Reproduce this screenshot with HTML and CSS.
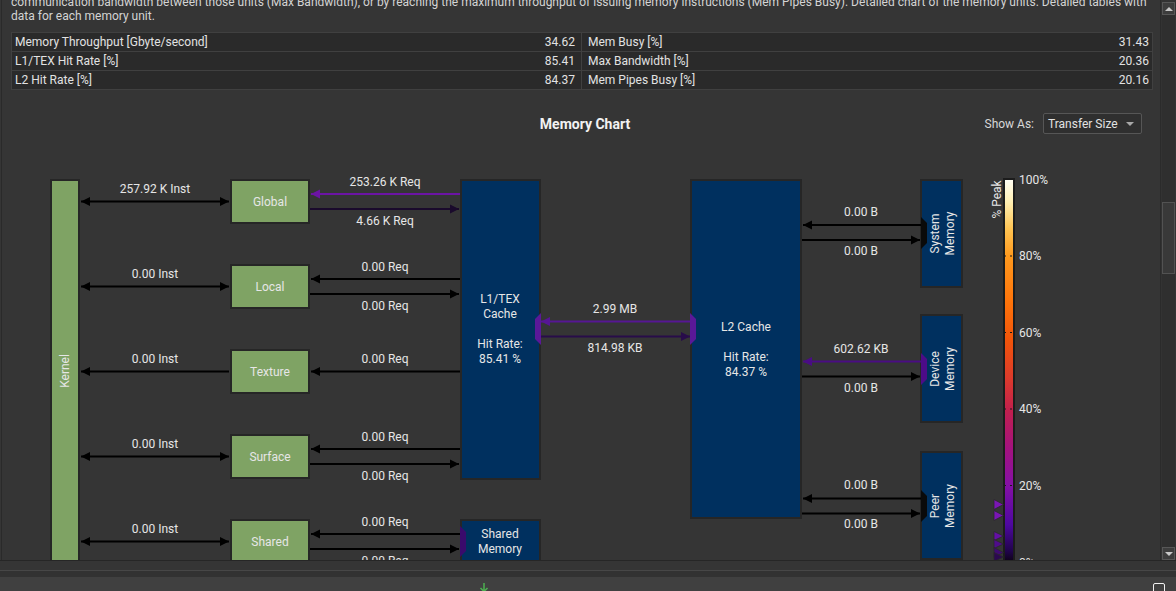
FILE: index.html
```html
<!DOCTYPE html>
<html lang="en">
<head>
<meta charset="utf-8">
<title>Memory Workload Analysis</title>
<link rel="stylesheet" href="styles.css">
</head>
<body>
<div class="main">
  <div class="content">
    <p class="desc">communication bandwidth between those units (Max Bandwidth), or by reaching the maximum throughput of issuing memory instructions (Mem Pipes Busy). Detailed chart of the memory units. Detailed tables with<br>data for each memory unit.</p>
    <div class="stats">
      <div class="cell l"><span>Memory Throughput [Gbyte/second]</span><span>34.62</span></div>
      <div class="cell"><span>Mem Busy [%]</span><span>31.43</span></div>
      <div class="cell l"><span>L1/TEX Hit Rate [%]</span><span>85.41</span></div>
      <div class="cell"><span>Max Bandwidth [%]</span><span>20.36</span></div>
      <div class="cell l last"><span>L2 Hit Rate [%]</span><span>84.37</span></div>
      <div class="cell last"><span>Mem Pipes Busy [%]</span><span>20.16</span></div>
    </div>
    <div class="chart-head">
      <div></div>
      <h2 class="chart-title">Memory Chart</h2>
      <div class="show-as"><span>Show As:</span><div class="select">Transfer Size<span class="caret"></span></div></div>
    </div>
    <svg class="diagram" width="1158" height="390" viewBox="2 170 1158 390">
      <defs>
        <linearGradient id="heat" x1="0" y1="0" x2="0" y2="1">
          <stop offset="0" stop-color="#fffef5"/>
          <stop offset="0.06" stop-color="#ffefb2"/>
          <stop offset="0.13" stop-color="#ffc452"/>
          <stop offset="0.2" stop-color="#ff9a1e"/>
          <stop offset="0.32" stop-color="#ff740a"/>
          <stop offset="0.42" stop-color="#f2540a"/>
          <stop offset="0.52" stop-color="#dc3a2c"/>
          <stop offset="0.6" stop-color="#c2204c"/>
          <stop offset="0.7" stop-color="#a4127e"/>
          <stop offset="0.8" stop-color="#8410a6"/>
          <stop offset="0.9" stop-color="#4e08a0"/>
          <stop offset="0.97" stop-color="#20044a"/>
          <stop offset="1" stop-color="#0c0210"/>
        </linearGradient>
      </defs>

      <!-- nodes -->
      <rect class="g" x="51" y="180" width="28" height="420"/>
      <rect class="g" x="231" y="180" width="78" height="43"/>
      <rect class="g" x="231" y="265" width="78" height="43"/>
      <rect class="g" x="231" y="350" width="78" height="43"/>
      <rect class="g" x="231" y="435" width="78" height="43"/>
      <rect class="g" x="231" y="520" width="78" height="43"/>
      <rect class="b" x="461" y="180" width="79" height="299"/>
      <rect class="b" x="461" y="520" width="79" height="44"/>
      <rect class="b" x="691" y="180" width="110" height="338"/>
      <rect class="b" x="921" y="180" width="41" height="107"/>
      <rect class="b" x="921" y="315" width="41" height="107"/>
      <rect class="b" x="921" y="452" width="41" height="107"/>

      <!-- connector tabs -->
      <polygon class="tab-p" points="541,313 535,319 535,339 541,345"/>
      <polygon class="tab-p" points="690,313 696,319 696,339 690,345"/>
      <polygon class="tab-d" points="460,526 466,532 466,551 460,557"/>
      <polygon class="tab-k" points="921,217 927,223 927,243 921,249"/>
      <polygon class="tab-v" points="921,353 927,359 927,379 921,385"/>
      <polygon class="tab-k" points="921,490 927,496 927,516 921,522"/>

      <!-- kernel <-> units -->
      <g class="ak">
        <line x1="81" y1="201.5" x2="229" y2="201.5"/>
        <polygon points="81,201.5 90,197 90,206"/><polygon points="229,201.5 220,197 220,206"/>
        <line x1="81" y1="286.5" x2="229" y2="286.5"/>
        <polygon points="81,286.5 90,282 90,291"/><polygon points="229,286.5 220,282 220,291"/>
        <line x1="81" y1="371.5" x2="229" y2="371.5"/>
        <polygon points="81,371.5 90,367 90,376"/>
        <line x1="81" y1="456.5" x2="229" y2="456.5"/>
        <polygon points="81,456.5 90,452 90,461"/><polygon points="229,456.5 220,452 220,461"/>
        <line x1="81" y1="541.5" x2="229" y2="541.5"/>
        <polygon points="81,541.5 90,537 90,546"/><polygon points="229,541.5 220,537 220,546"/>
      </g>

      <!-- units <-> L1 -->
      <g class="a1">
        <line x1="311" y1="194" x2="460" y2="194"/>
        <polygon points="311,194 320,189.5 320,198.5"/>
      </g>
      <g class="a2">
        <line x1="310" y1="209" x2="459" y2="209"/>
        <polygon points="459,209 450,204.5 450,213.5"/>
      </g>
      <g class="ak">
        <line x1="311" y1="279" x2="460" y2="279"/>
        <polygon points="311,279 320,274.5 320,283.5"/>
        <line x1="310" y1="294" x2="459" y2="294"/>
        <polygon points="459,294 450,289.5 450,298.5"/>
        <line x1="311" y1="371.5" x2="460" y2="371.5"/>
        <polygon points="311,371.5 320,367 320,376"/>
        <line x1="311" y1="449" x2="460" y2="449"/>
        <polygon points="311,449 320,444.5 320,453.5"/>
        <line x1="310" y1="464" x2="459" y2="464"/>
        <polygon points="459,464 450,459.5 450,468.5"/>
        <line x1="311" y1="534" x2="460" y2="534"/>
        <polygon points="311,534 320,529.5 320,538.5"/>
        <line x1="310" y1="549" x2="459" y2="549"/>
        <polygon points="459,549 450,544.5 450,553.5"/>
      </g>

      <!-- L1 <-> L2 -->
      <g class="a3">
        <line x1="541" y1="321.5" x2="690" y2="321.5"/>
        <polygon points="541,321.5 550,317 550,326"/>
      </g>
      <g class="a4">
        <line x1="541" y1="336.5" x2="690" y2="336.5"/>
        <polygon points="690,336.5 681,332 681,341"/>
      </g>

      <!-- L2 <-> memories -->
      <g class="ak">
        <line x1="803" y1="225" x2="921" y2="225"/>
        <polygon points="803,225 812,220.5 812,229.5"/>
        <line x1="802" y1="240" x2="920" y2="240"/>
        <polygon points="920,240 911,235.5 911,244.5"/>
        <line x1="802" y1="376.5" x2="920" y2="376.5"/>
        <polygon points="920,376.5 911,372 911,381"/>
        <line x1="803" y1="498.5" x2="921" y2="498.5"/>
        <polygon points="803,498.5 812,494 812,503"/>
        <line x1="802" y1="513.5" x2="920" y2="513.5"/>
        <polygon points="920,513.5 911,509 911,518"/>
      </g>
      <g class="a5">
        <line x1="803" y1="361.5" x2="921" y2="361.5"/>
        <polygon points="803,361.5 812,357 812,366"/>
      </g>

      <!-- node labels -->
      <text class="t c" transform="translate(64.5,371) rotate(-90)" x="0" y="4.3">Kernel</text>
      <text class="t c" x="270" y="206">Global</text>
      <text class="t c" x="270" y="291">Local</text>
      <text class="t c" x="270" y="376">Texture</text>
      <text class="t c" x="270" y="461">Surface</text>
      <text class="t c" x="270" y="546">Shared</text>
      <text class="t c" x="500" y="303">L1/TEX</text>
      <text class="t c" x="500" y="318">Cache</text>
      <text class="t c" x="500" y="348">Hit Rate:</text>
      <text class="t c" x="500" y="363">85.41 %</text>
      <text class="t c" x="500" y="538">Shared</text>
      <text class="t c" x="500" y="553">Memory</text>
      <text class="t c" x="746" y="331">L2 Cache</text>
      <text class="t c" x="746" y="361">Hit Rate:</text>
      <text class="t c" x="746" y="376">84.37 %</text>
      <g transform="translate(941,233.5) rotate(-90)">
        <text class="t c" x="0" y="-2">System</text>
        <text class="t c" x="0" y="13">Memory</text>
      </g>
      <g transform="translate(941,369) rotate(-90)">
        <text class="t c" x="0" y="-2">Device</text>
        <text class="t c" x="0" y="13">Memory</text>
      </g>
      <g transform="translate(941,506) rotate(-90)">
        <text class="t c" x="0" y="-2">Peer</text>
        <text class="t c" x="0" y="13">Memory</text>
      </g>

      <!-- edge labels -->
      <text class="t c" x="155" y="193">257.92 K Inst</text>
      <text class="t c" x="155" y="278">0.00 Inst</text>
      <text class="t c" x="155" y="363">0.00 Inst</text>
      <text class="t c" x="155" y="448">0.00 Inst</text>
      <text class="t c" x="155" y="533">0.00 Inst</text>
      <text class="t c" x="385" y="186">253.26 K Req</text>
      <text class="t c" x="385" y="225">4.66 K Req</text>
      <text class="t c" x="385" y="271">0.00 Req</text>
      <text class="t c" x="385" y="310">0.00 Req</text>
      <text class="t c" x="385" y="363">0.00 Req</text>
      <text class="t c" x="385" y="441">0.00 Req</text>
      <text class="t c" x="385" y="480">0.00 Req</text>
      <text class="t c" x="385" y="526">0.00 Req</text>
      <text class="t c" x="385" y="565">0.00 Req</text>
      <text class="t c" x="615" y="313">2.99 MB</text>
      <text class="t c" x="615" y="352">814.98 KB</text>
      <text class="t c" x="861" y="216">0.00 B</text>
      <text class="t c" x="861" y="255">0.00 B</text>
      <text class="t c" x="861" y="353">602.62 KB</text>
      <text class="t c" x="861" y="392">0.00 B</text>
      <text class="t c" x="861" y="489">0.00 B</text>
      <text class="t c" x="861" y="528">0.00 B</text>

      <!-- legend -->
      <text class="t c" transform="translate(996.5,199.5) rotate(-90)" x="0" y="4.3">% Peak</text>
      <rect class="bar" x="1004" y="179" width="10" height="384"/>
      <g class="tick">
        <line x1="1004" y1="256" x2="1016" y2="256"/>
        <line x1="1004" y1="332.5" x2="1016" y2="332.5"/>
        <line x1="1004" y1="409" x2="1016" y2="409"/>
        <line x1="1004" y1="485.5" x2="1016" y2="485.5"/>
      </g>
      <text class="t" x="1019" y="184">100%</text>
      <text class="t" x="1019" y="260">80%</text>
      <text class="t" x="1019" y="337">60%</text>
      <text class="t" x="1019" y="413">40%</text>
      <text class="t" x="1019" y="490">20%</text>
      <text class="t" x="1019" y="567">0%</text>
      <polygon class="mk m1" points="994,499.5 1003.5,504.5 994,509.5"/>
      <polygon class="mk m1" points="994,510.5 1003.5,515.5 994,520.5"/>
      <polygon class="mk m2" points="994,531.5 1003.5,536 994,540.5"/>
      <polygon class="mk m3" points="994,539.5 1003.5,544 994,548.5"/>
      <polygon class="mk m4" points="994,547.5 1003.5,552.5 994,557.5"/>
      <polygon class="mk m5" points="994,552.5 1003.5,557 994,561.5"/>
    </svg>
  </div>
  <div class="scrollbar">
    <div class="sb-btn"><span class="up"></span></div>
    <div class="sb-track"><div class="sb-thumb"></div></div>
    <div class="sb-btn"><span class="down"></span></div>
  </div>
</div>
<div class="bottom">
  <div class="band"></div>
  <div class="band2"></div>
  <div class="toolbar">
    <svg class="dl" width="10" height="10" viewBox="0 0 10 10"><path d="M5 0 V8 M1.5 5 L5 8.5 L8.5 5"/></svg>
    <span class="check"></span>
  </div>
</div>
</body>
</html>
```

FILE: styles.css
```css
html, body {
  margin: 0;
  padding: 0;
}
body {
  width: 1176px;
  height: 591px;
  overflow: hidden;
  background: #353535;
  font-family: Roboto, "Liberation Sans", sans-serif;
  font-size: 12px;
  color: #dedede;
}
.main {
  display: flex;
  height: 560px;
  border-bottom: 1px solid #262626;
}
.content {
  flex: 1;
  min-width: 0;
  margin-left: 1px;
  border-left: 1px solid #2a2a2a;
  padding: 0 7px 0 9px;
  overflow: hidden;
}
.desc {
  margin: -5px 0 0;
  line-height: 14px;
  color: #d4d4d4;
  white-space: nowrap;
}
.stats {
  margin-top: 9px;
  display: grid;
  grid-template-columns: 1fr 1fr;
  background: #2a2a2a;
  border: 1px solid #404040;
}
.cell {
  display: flex;
  justify-content: space-between;
  height: 18px;
  line-height: 18px;
  padding: 0 3px 0 6px;
  border-bottom: 1px solid #404040;
  color: #e2e2e2;
}
.cell.l {
  border-right: 1px solid #404040;
  padding: 0 6px 0 3px;
}
.cell.last {
  border-bottom: 0;
}
.chart-head {
  margin-top: 23px;
  height: 21px;
  display: grid;
  grid-template-columns: 1fr auto 1fr;
  align-items: center;
}
.chart-title {
  margin: 0 0 0 6px;
  font-size: 14px;
  font-weight: 700;
  color: #f2f2f2;
}
.show-as {
  justify-self: end;
  display: flex;
  align-items: center;
  gap: 9px;
  margin-right: 11px;
  color: #d8d8d8;
}
.select {
  position: relative;
  box-sizing: border-box;
  width: 99px;
  height: 21px;
  padding-left: 4px;
  display: flex;
  align-items: center;
  background: #2f2f2f;
  border: 1px solid #565656;
  border-radius: 2px;
  color: #e2e2e2;
}
.caret {
  position: absolute;
  right: 7px;
  top: 8px;
  border-left: 4px solid transparent;
  border-right: 4px solid transparent;
  border-top: 4px solid #a8a8a8;
}
.diagram {
  display: block;
  margin: 36px 0 0 -9px;
}
.diagram .g {
  fill: #7fa364;
  stroke: #262626;
  stroke-width: 2;
}
.diagram .b {
  fill: #00305f;
  stroke: #262626;
  stroke-width: 2;
}
.diagram .t {
  font-family: Roboto, "Liberation Sans", sans-serif;
  font-size: 12px;
  fill: #e6e6e6;
}
.diagram .c {
  text-anchor: middle;
}
.ak line { stroke: #000; stroke-width: 2; }
.ak polygon { fill: #000; }
.a1 line { stroke: #6c14a4; stroke-width: 2; }
.a1 polygon { fill: #6c14a4; }
.a2 line { stroke: #1a0a2c; stroke-width: 2; }
.a2 polygon { fill: #1a0a2c; }
.a3 line { stroke: #561694; stroke-width: 2; }
.a3 polygon { fill: #561694; }
.a4 line { stroke: #280c4a; stroke-width: 2; }
.a4 polygon { fill: #280c4a; }
.a5 line { stroke: #4a0c84; stroke-width: 2; }
.a5 polygon { fill: #4a0c84; }
.tab-p { fill: #5a1898; }
.tab-d { fill: #3a0a6c; }
.tab-k { fill: #0a0a0a; }
.tab-v { fill: #4c0c88; }
.bar {
  fill: url(#heat);
  stroke: #1c1c1c;
  stroke-width: 2;
}
.tick line {
  stroke: #1a1a1a;
  stroke-width: 1;
  stroke-dasharray: 2 4;
}
.mk {
  stroke: #2a2a2a;
  stroke-width: 0.8;
}
.m1 { fill: #7a16b4; }
.m2 { fill: #6410a4; }
.m3 { fill: #500c8c; }
.m4 { fill: #3e0a70; }
.m5 { fill: #2c0850; }

.scrollbar {
  box-sizing: border-box;
  width: 16px;
  padding: 2px 1px 0 1px;
  border-left: 1px solid #2b2b2b;
  background: #333333;
  display: flex;
  flex-direction: column;
}
.sb-btn {
  box-sizing: border-box;
  height: 13px;
  background: #3d3d3d;
  border: 1px solid #575757;
  display: flex;
  align-items: center;
  justify-content: center;
}
.sb-btn .up {
  border-left: 4px solid transparent;
  border-right: 4px solid transparent;
  border-bottom: 4px solid #c8c8c8;
}
.sb-btn .down {
  border-left: 4px solid transparent;
  border-right: 4px solid transparent;
  border-top: 4px solid #c8c8c8;
}
.sb-track {
  flex: 1;
  background: #2f2f2f;
}
.sb-thumb {
  box-sizing: border-box;
  margin-top: 187px;
  height: 72px;
  background: #393939;
  border: 1px solid #525252;
}
.bottom {
  height: 30px;
}
.band {
  height: 9px;
  background: #353535;
  border-bottom: 1px solid #474747;
}
.band2 {
  height: 6px;
  background: #323232;
}
.toolbar {
  box-sizing: border-box;
  height: 20px;
  padding-top: 6px;
  background: #404040;
  display: flex;
  align-items: flex-start;
}
.dl {
  margin-left: 479px;
  fill: none;
  stroke: #4cb050;
  stroke-width: 1.5;
}
.check {
  margin-left: auto;
  margin-right: 11px;
  width: 10px;
  height: 12px;
  border: 1.5px solid #f0f0f0;
  border-radius: 2px;
}
```
